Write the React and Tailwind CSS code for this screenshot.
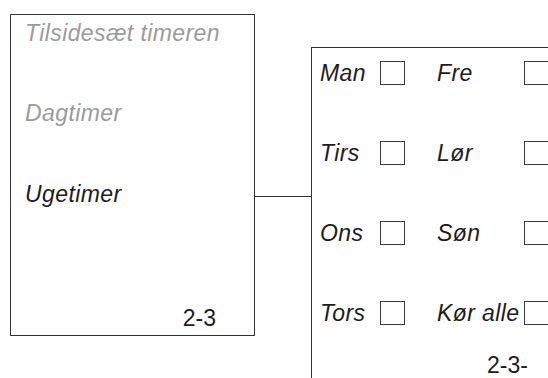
const dage = [
  ['Man', 'Fre'],
  ['Tirs', 'Lør'],
  ['Ons', 'Søn'],
  ['Tors', 'Kør alle'],
]

function Afkrydsning() {
  return <div className="h-[24px] w-[25px] shrink-0 border-[1.5px] border-[#3a3a3a] bg-white" />
}

export default function App() {
  return (
    <div
      className="flex h-[378px] w-[548px] items-start overflow-hidden bg-white text-[23px] leading-[24px] text-[#1c1c1c]"
      style={{ fontFamily: '"Liberation Sans", Arial, sans-serif' }}
    >
      <div className="ml-[10px] mt-[14px] flex h-[322px] w-[245px] shrink-0 flex-col whitespace-nowrap border border-[#333] pl-[14px] pt-[6px] pb-[5px] pr-[38px]">
        <p className="italic tracking-[0.4px] text-[#9b9b9b]">Tilsidesæt timeren</p>
        <p className="mt-[56px] italic tracking-[0.4px] text-[#9b9b9b]">Dagtimer</p>
        <p className="mt-[57px] italic tracking-[0.4px]">Ugetimer</p>
        <p className="mt-auto self-end">2-3</p>
      </div>

      <div className="mt-[196px] h-px w-[56px] shrink-0 bg-[#333]" />

      <div className="mt-[47px] h-[360px] w-[260px] shrink-0 whitespace-nowrap border-l border-t border-[#333] pl-[8px] pt-[13px]">
        <div className="grid gap-[56px]">
          {dage.map(([venstre, hoejre]) => (
            <div key={venstre} className="flex h-[24px] items-center">
              <span className="w-[60px] shrink-0 italic tracking-[0.4px]">{venstre}</span>
              <Afkrydsning />
              <span className="ml-[32px] w-[87px] shrink-0 italic tracking-[0.4px]">{hoejre}</span>
              <Afkrydsning />
            </div>
          ))}
        </div>
        <p className="mt-[28px] pl-[167px]">2-3-</p>
      </div>
    </div>
  )
}
